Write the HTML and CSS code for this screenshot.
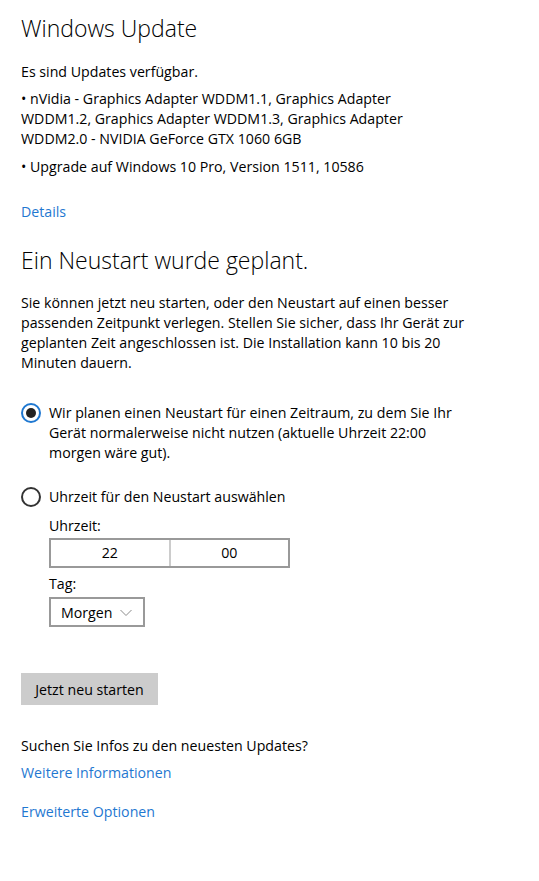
FILE: index.html
```html
<!DOCTYPE html>
<html lang="de">
<head>
<meta charset="utf-8">
<title>Windows Update</title>
<link rel="stylesheet" href="styles.css">
</head>
<body>
<main class="page">
  <h1 class="title">Windows Update</h1>
  <p class="text status">Es sind Updates verfügbar.</p>
  <ul class="updates">
    <li>• nVidia - Graphics Adapter WDDM1.1, Graphics Adapter WDDM1.2, Graphics Adapter WDDM1.3, Graphics Adapter WDDM2.0 - NVIDIA GeForce GTX 1060 6GB</li>
    <li>• Upgrade auf Windows 10 Pro, Version 1511, 10586</li>
  </ul>
  <a class="link details" href="#">Details</a>

  <h2 class="subtitle">Ein Neustart wurde geplant.</h2>
  <p class="text desc">Sie können jetzt neu starten, oder den Neustart auf einen besser passenden Zeitpunkt verlegen. Stellen Sie sicher, dass Ihr Gerät zur geplanten Zeit angeschlossen ist. Die Installation kann 10 bis 20 Minuten dauern.</p>

  <div class="options">
    <label class="radio-row">
      <span class="radio checked"><span class="dot"></span></span>
      <span class="radio-text">Wir planen einen Neustart für einen Zeitraum, zu dem Sie Ihr Gerät normalerweise nicht nutzen (aktuelle Uhrzeit 22:00 morgen wäre gut).</span>
    </label>
    <label class="radio-row second">
      <span class="radio"></span>
      <span class="radio-text">Uhrzeit für den Neustart auswählen</span>
    </label>
  </div>

  <div class="picker">
    <div class="field-label">Uhrzeit:</div>
    <div class="timebox">
      <span class="cell">22</span>
      <span class="cell">00</span>
    </div>
    <div class="field-label day-label">Tag:</div>
    <div class="select">
      <span>Morgen</span>
      <svg class="chev" width="12" height="8" viewBox="0 0 12 8"><path d="M0.5 1 L6 6.5 L11.5 1" fill="none" stroke="#8a8a8a" stroke-width="1"/></svg>
    </div>
  </div>

  <button class="btn">Jetzt neu starten</button>

  <p class="text info">Suchen Sie Infos zu den neuesten Updates?</p>
  <a class="link more" href="#">Weitere Informationen</a>
  <a class="link adv" href="#">Erweiterte Optionen</a>
</main>
</body>
</html>
```
FILE: styles.css
```css
html, body {
  margin: 0;
  padding: 0;
  background: #fff;
}
body {
  font-family: "Open Sans", "Noto Sans", sans-serif;
  font-size: 14.2px;
  color: #000;
}
.page {
  padding: 12px 21px 40px 21px;
  width: 437px;
  display: flex;
  flex-direction: column;
  align-items: flex-start;
}
.title, .subtitle {
  font-weight: 300;
  font-size: 23px;
  line-height: 32px;
  margin: 0;
  color: #000;
}
.text {
  margin: 0;
  line-height: 20px;
}
.status {
  margin-top: 18px;
}
.updates {
  list-style: none;
  padding: 0;
  margin: 7px 0 0 0;
  line-height: 20px;
}
.updates li + li {
  margin-top: 8px;
}
.link {
  color: #1f78d1;
  text-decoration: none;
  line-height: 20px;
}
.details {
  margin-top: 25px;
}
.subtitle {
  margin-top: 22px;
}
.desc {
  margin-top: 17px;
  width: 448px;
}
.options {
  margin-top: 30px;
  display: flex;
  flex-direction: column;
  gap: 24px;
}
.radio-row {
  display: flex;
  align-items: flex-start;
  gap: 8px;
}
.radio {
  flex: none;
  width: 16px;
  height: 16px;
  border: 2px solid #333;
  border-radius: 50%;
  display: flex;
  align-items: center;
  justify-content: center;
}
.radio.checked {
  border-color: #1f78d1;
}
.dot {
  width: 10px;
  height: 10px;
  border-radius: 50%;
  background: #222;
}
.radio-text {
  line-height: 20px;
}
.picker {
  margin-left: 28px;
  margin-top: 9px;
  display: flex;
  flex-direction: column;
  align-items: flex-start;
}
.field-label {
  line-height: 20px;
}
.timebox {
  margin-top: 2px;
  display: flex;
  width: 237px;
  height: 26px;
  border: 2px solid #999;
}
.cell {
  flex: 1;
  text-align: center;
  line-height: 26px;
}
.cell + .cell {
  border-left: 2px solid #ccc;
}
.day-label {
  margin-top: 6px;
}
.select {
  margin-top: 3px;
  height: 26px;
  border: 2px solid #999;
  padding: 0 10px 0 10px;
  display: flex;
  align-items: center;
  gap: 8px;
  width: 72px;
}
.chev {
  margin-top: 1px;
}
.btn {
  margin-top: 46px;
  background: #ccc;
  border: none;
  font: inherit;
  color: #000;
  width: 137px;
  height: 32px;
  padding: 0;
}
.info {
  margin-top: 31px;
}
.more {
  margin-top: 7px;
}
.adv {
  margin-top: 19px;
}
```
